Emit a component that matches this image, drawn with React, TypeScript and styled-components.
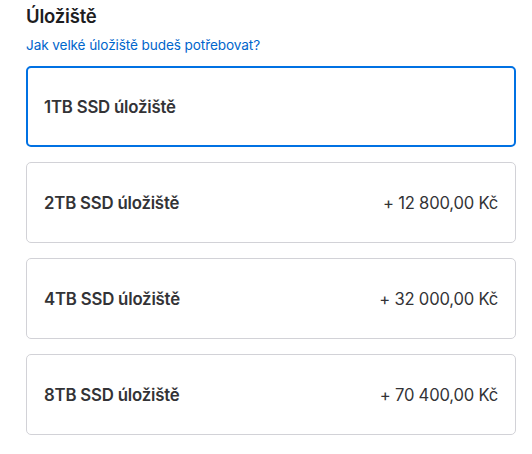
import React from "react";
import styled, { createGlobalStyle } from "styled-components";

const Global = createGlobalStyle`
  html, body { margin: 0; padding: 0; background: #fff; }
  body { font-family: Inter, "Noto Sans", "Liberation Sans", sans-serif; color: #1d1d1f; }
  * { box-sizing: border-box; }
`;

const Section = styled.section`
  width: 532px;
  padding: 4px 16px 0 26px;
  display: flex;
  flex-direction: column;
`;

const Title = styled.h2`
  margin: 0;
  font-size: 18.5px;
  line-height: 24px;
  font-weight: 600;
  letter-spacing: -0.2px;
  color: #1d1d1f;
`;

const Hint = styled.a`
  margin-top: 8px;
  font-size: 13.6px;
  line-height: 18px;
  color: #0066cc;
  text-decoration: none;
  letter-spacing: -0.1px;
`;

const List = styled.div`
  margin-top: 12px;
  display: flex;
  flex-direction: column;
  gap: 15px;
`;

const Option = styled.div<{ $selected?: boolean }>`
  height: 81px;
  display: flex;
  align-items: center;
  justify-content: space-between;
  border-radius: 5px;
  border: ${(p) => (p.$selected ? "2px solid #0071e3" : "1px solid #d2d2d7")};
  padding: 0 ${(p) => (p.$selected ? "16px" : "17px")};
`;

const Name = styled.span`
  font-size: 16.8px;
  font-weight: 600;
  letter-spacing: -0.2px;
  color: #333336;
`;

const Price = styled.span`
  font-size: 16.6px;
  font-weight: 400;
  letter-spacing: -0.2px;
  color: #333336;
`;

const options = [
  { name: "1TB SSD úložiště", price: "" },
  { name: "2TB SSD úložiště", price: "+ 12 800,00 Kč" },
  { name: "4TB SSD úložiště", price: "+ 32 000,00 Kč" },
  { name: "8TB SSD úložiště", price: "+ 70 400,00 Kč" },
];

export default function App() {
  return (
    <>
      <Global />
      <Section>
        <Title>Úložiště</Title>
        <Hint href="#">Jak velké úložiště budeš potřebovat?</Hint>
        <List>
          {options.map((o, i) => (
            <Option key={o.name} $selected={i === 0}>
              <Name>{o.name}</Name>
              {o.price && <Price>{o.price}</Price>}
            </Option>
          ))}
        </List>
      </Section>
    </>
  );
}
